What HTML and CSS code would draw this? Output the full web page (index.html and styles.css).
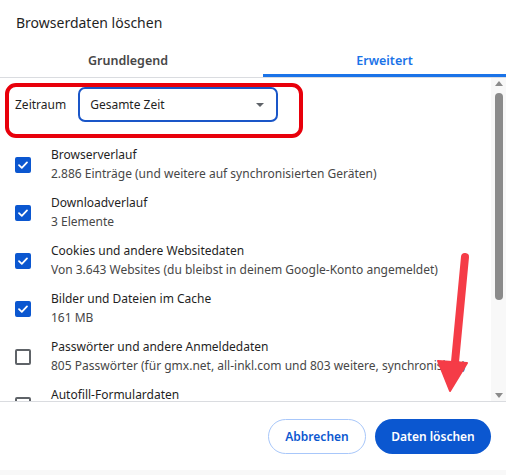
FILE: index.html
```html
<!DOCTYPE html>
<html>
  <head>
    <meta charset="utf-8">
    <title>Browserdaten löschen</title>
    <link rel="stylesheet" href="styles.css">
  </head>
  <body>
    <div class="dialog">
      <h1 class="dialog-title">Browserdaten löschen</h1>

      <div class="tabs">
        <div class="tab">Grundlegend</div>
        <div class="tab tab-active">Erweitert</div>
      </div>

      <div class="body">
        <div class="content">
          <div class="range-row">
            <span class="range-label">Zeitraum</span>
            <div class="select">
              <span>Gesamte Zeit</span>
              <span class="select-caret"></span>
            </div>
          </div>

          <div class="option">
            <span class="checkbox checked"><svg viewBox="0 0 16 16"><polyline points="4,8.2 6.8,10.8 12,5.4"/></svg></span>
            <div class="option-text">
              <div class="option-title">Browserverlauf</div>
              <div class="option-sub">2.886 Einträge (und weitere auf synchronisierten Geräten)</div>
            </div>
          </div>

          <div class="option">
            <span class="checkbox checked"><svg viewBox="0 0 16 16"><polyline points="4,8.2 6.8,10.8 12,5.4"/></svg></span>
            <div class="option-text">
              <div class="option-title">Downloadverlauf</div>
              <div class="option-sub">3 Elemente</div>
            </div>
          </div>

          <div class="option">
            <span class="checkbox checked"><svg viewBox="0 0 16 16"><polyline points="4,8.2 6.8,10.8 12,5.4"/></svg></span>
            <div class="option-text">
              <div class="option-title">Cookies und andere Websitedaten</div>
              <div class="option-sub">Von 3.643 Websites (du bleibst in deinem Google-Konto angemeldet)</div>
            </div>
          </div>

          <div class="option">
            <span class="checkbox checked"><svg viewBox="0 0 16 16"><polyline points="4,8.2 6.8,10.8 12,5.4"/></svg></span>
            <div class="option-text">
              <div class="option-title">Bilder und Dateien im Cache</div>
              <div class="option-sub">161 MB</div>
            </div>
          </div>

          <div class="option">
            <span class="checkbox"></span>
            <div class="option-text">
              <div class="option-title">Passwörter und andere Anmeldedaten</div>
              <div class="option-sub">805 Passwörter (für gmx.net, all-inkl.com und 803 weitere, synchronisiert)</div>
            </div>
          </div>

          <div class="option">
            <span class="checkbox"></span>
            <div class="option-text">
              <div class="option-title">Autofill-Formulardaten</div>
              <div class="option-sub">&nbsp;</div>
            </div>
          </div>
        </div>

        <div class="scrollbar">
          <span class="scroll-up"></span>
          <div class="scroll-track"><div class="scroll-thumb"></div></div>
          <span class="scroll-down"></span>
        </div>
      </div>

      <div class="footer">
        <button class="btn btn-cancel">Abbrechen</button>
        <button class="btn btn-confirm">Daten löschen</button>
      </div>
      <div class="bottom-strip"></div>

      <!-- annotations drawn on top of the screenshot -->
      <div class="mark-box"></div>
      <svg class="mark-arrow" viewBox="0 0 506 475">
        <line x1="465" y1="257" x2="455" y2="362" />
        <polygon points="438,361 467,363 450,391" />
      </svg>
    </div>
  </body>
</html>
```

FILE: styles.css
```css
body{
  margin: 0;
  background-color: white;
  font-family: "Noto Sans", "Open Sans", Arial, sans-serif;
  color: #1f1f1f;
}

.dialog{
  position: relative;
  width: 506px;
  height: 475px;
  display: flex;
  flex-direction: column;
  overflow: hidden;
}

.dialog-title{
  margin: 0;
  padding: 13px 16px 0 16px;
  height: 27px;
  font-size: 14px;
  font-weight: normal;
  line-height: 20px;
}

.tabs{
  display: grid;
  grid-template-columns: 256px 243px;
  column-gap: 7px;
  border-bottom: 1px solid #dadce0;
}

.tab{
  text-align: center;
  font-size: 12.5px;
  font-weight: 600;
  color: #474747;
  height: 37px;
  padding-top: 11px;
  line-height: 20px;
  box-sizing: border-box;
}

.tab-active{
  color: #1a73e8;
  border-bottom: 3px solid #1a73e8;
}

.body{
  flex: 1;
  display: flex;
  overflow: hidden;
  min-height: 0;
}

.content{
  flex: 1;
  overflow: hidden;
  padding: 9px 0 0 15px;
}

.range-row{
  display: flex;
  align-items: center;
  gap: 12px;
  height: 35px;
  margin-bottom: 18px;
}

.range-label{
  font-size: 12px;
  color: #1f1f1f;
}

.select{
  width: 200px;
  height: 35px;
  box-sizing: border-box;
  border: 2px solid #1a56c8;
  border-radius: 7px;
  display: flex;
  align-items: center;
  justify-content: space-between;
  padding: 0 12px 0 10px;
  font-size: 12px;
  color: #1f1f1f;
}

.select-caret{
  width: 0;
  height: 0;
  border-left: 4px solid transparent;
  border-right: 4px solid transparent;
  border-top: 4px solid #5f6368;
}

.option{
  display: flex;
  align-items: center;
  gap: 20px;
  height: 48px;
}

.checkbox{
  width: 16px;
  height: 16px;
  box-sizing: border-box;
  border: 2px solid #5f6368;
  border-radius: 2px;
  flex-shrink: 0;
  margin-top: 2px;
}

.checkbox.checked{
  background-color: #0b57d0;
  border-color: #0b57d0;
}

.checkbox svg{
  display: block;
  width: 16px;
  height: 16px;
  margin: -2px;
}

.checkbox polyline{
  fill: none;
  stroke: white;
  stroke-width: 1.8;
  stroke-linecap: round;
  stroke-linejoin: round;
}

.option-text{
  white-space: nowrap;
}

.option-title{
  font-size: 12px;
  line-height: 19px;
  color: #1f1f1f;
}

.option-sub{
  font-size: 12px;
  line-height: 19px;
  color: #474747;
}

.scrollbar{
  width: 15px;
  display: flex;
  flex-direction: column;
  align-items: center;
  padding: 3px 0 3px 0;
  box-sizing: border-box;
  background-color: #f8f8f8;
}

.scroll-up,.scroll-down{
  width: 0;
  height: 0;
  border-left: 4px solid transparent;
  border-right: 4px solid transparent;
}

.scroll-up{
  border-bottom: 5px solid #8b8b8b;
}

.scroll-down{
  border-top: 5px solid #8b8b8b;
}

.scroll-track{
  flex: 1;
  width: 8px;
  padding-top: 7px;
}

.scroll-thumb{
  height: 207px;
  background-color: #8b8b8b;
  border-radius: 4px;
}

.footer{
  border-top: 1px solid #dadce0;
  height: 69px;
  display: flex;
  justify-content: flex-end;
  align-items: center;
  gap: 9px;
  padding-right: 15px;
  box-sizing: border-box;
}

.btn{
  height: 35px;
  border-radius: 18px;
  font-family: "Noto Sans", "Open Sans", Arial, sans-serif;
  font-size: 12px;
  font-weight: 600;
  cursor: pointer;
}

.btn-cancel{
  width: 98px;
  background-color: white;
  border: 1px solid #a8c7fa;
  color: #0b57d0;
}

.btn-confirm{
  width: 116px;
  background-color: #0b57d0;
  border: none;
  color: white;
}

.bottom-strip{
  height: 5px;
  background-color: #f8f8f8;
}

.mark-box{
  position: absolute;
  left: 5px;
  top: 83px;
  width: 298px;
  height: 55px;
  box-sizing: border-box;
  border: 4px solid #e8000b;
  border-radius: 11px;
}

.mark-arrow{
  position: absolute;
  left: 0;
  top: 0;
  width: 506px;
  height: 475px;
}

.mark-arrow line{
  stroke: #f53c47;
  stroke-width: 8;
  stroke-linecap: round;
}

.mark-arrow polygon{
  fill: #f53c47;
  stroke: #f53c47;
  stroke-width: 2;
  stroke-linejoin: round;
}
```
